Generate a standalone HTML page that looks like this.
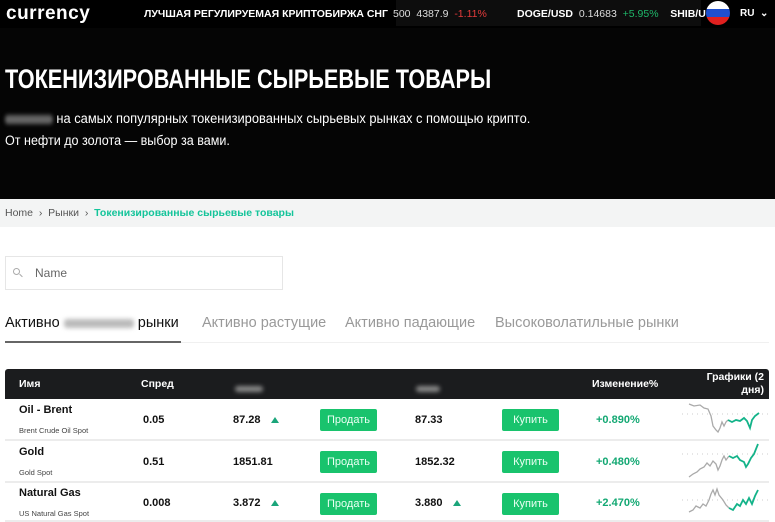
<!DOCTYPE html>
<html><head><meta charset="utf-8"><style>
*{margin:0;padding:0;box-sizing:border-box}
body{width:775px;height:522px;overflow:hidden;background:#fff;font-family:"Liberation Sans",sans-serif;position:relative;color:#111}
.a{position:absolute;white-space:nowrap}
.hero{position:absolute;left:0;top:0;width:775px;height:199px;background:#050505}
.top{position:absolute;left:0;top:0;width:775px;height:28px;background:#000}
.tick{position:absolute;left:396px;top:0;width:305px;height:26px;background:#0d0d0d}
.bc{position:absolute;left:0;top:199px;width:775px;height:28px;background:#f3f4f4}
.blur{display:inline-block;background:#9a9a9a;filter:blur(2px);border-radius:3px;vertical-align:middle}
.th{position:absolute;top:369px;left:5px;width:764px;height:30px;background:#1b1c1e;border-radius:3px 3px 0 0}
.row{position:absolute;left:5px;width:764px;height:42px;border-bottom:2px solid #ececec;background:#fff}
.btn{position:absolute;width:57px;height:22px;background:#19c36d;color:#eafff3;font-size:11px;text-align:center;line-height:22px;border-radius:2px}
.nm{font-size:11px;font-weight:bold}
.sub{font-size:7.5px;color:#444}
.v{font-size:11px;font-weight:bold}
.g{color:#13a873;font-size:11px;font-weight:bold}
.tri{display:inline-block;width:0;height:0;border-left:4px solid transparent;border-right:4px solid transparent;border-bottom:6px solid #1aa57a;margin-left:10px}
</style></head><body>
<div class="hero"></div>
<div class="top"></div>
<div class="tick"></div>
<div class="a" style="left:6px;top:3px;color:#fff;font-size:19px;font-weight:bold;letter-spacing:0.5px">currency</div>
<div class="a" style="left:144px;top:8px;color:#fff;font-size:10.5px;font-weight:bold">ЛУЧШАЯ РЕГУЛИРУЕМАЯ КРИПТОБИРЖА СНГ</div>
<div class="a" style="left:393px;top:8px;color:#ddd;font-size:10.5px">500&nbsp;&nbsp;4387.9&nbsp;&nbsp;<span style="color:#e53b3b">-1.11%</span></div>
<div class="a" style="left:517px;top:8px;color:#ddd;font-size:10.5px"><b style="color:#fff">DOGE/USD</b>&nbsp;&nbsp;0.14683&nbsp;&nbsp;<span style="color:#1fb86a">+5.95%</span>&nbsp;&nbsp;&nbsp;&nbsp;<b style="color:#fff">SHIB/U</b></div>
<div class="a" style="left:706px;top:1px;width:24px;height:24px;border-radius:50%;overflow:hidden"><div style="height:8px;background:#fff"></div><div style="height:8px;background:#1e4fcf"></div><div style="height:8px;background:#e0201f"></div></div>
<div class="a" style="left:740px;top:8px;color:#fff;font-size:10px;font-weight:bold">RU&nbsp;&nbsp;⌄</div>
<div class="a" style="left:5px;top:64px;color:#fff;font-size:27px;font-weight:bold;transform:scaleX(0.803);transform-origin:0 0">ТОКЕНИЗИРОВАННЫЕ СЫРЬЕВЫЕ ТОВАРЫ</div>
<div class="a" style="left:5px;top:111px;color:#fff;font-size:13.5px;transform:scaleX(0.955);transform-origin:0 0"><span class="blur" style="width:50px;height:9px;background:#666"></span> на самых популярных токенизированных сырьевых рынках с помощью крипто.</div>
<div class="a" style="left:5px;top:133px;color:#fff;font-size:13.5px;transform:scaleX(0.93);transform-origin:0 0">От нефти до золота — выбор за вами.</div>
<div class="bc"></div>
<div class="a" style="left:5px;top:207px;font-size:10.5px;color:#555">Home&nbsp;&nbsp;›&nbsp;&nbsp;Рынки&nbsp;&nbsp;›&nbsp;&nbsp;<b style="color:#14c49a">Токенизированные сырьевые товары</b></div>
<div class="a" style="left:5px;top:256px;width:278px;height:34px;border:1px solid #e6e6e6"></div>
<div class="a" style="left:13px;top:268px;width:7px;height:7px;border:1px solid #aaa;border-radius:50%"></div>
<div class="a" style="left:19px;top:275px;width:4px;height:1px;background:#aaa;transform:rotate(45deg)"></div>
<div class="a" style="left:35px;top:266px;font-size:12px;color:#666">Name</div>
<div class="a" style="left:5px;top:315px;font-size:14.5px;color:#111">Активно <span class="blur" style="width:70px;height:9px;background:#bbb"></span> рынки</div>
<div class="a" style="left:202px;top:315px;font-size:14.5px;color:#999">Активно растущие</div>
<div class="a" style="left:345px;top:315px;font-size:14.5px;color:#999">Активно падающие</div>
<div class="a" style="left:495px;top:315px;font-size:14.5px;color:#999">Высоковолатильные рынки</div>
<div class="a" style="left:5px;top:342px;width:764px;height:1px;background:#f0f0f0"></div>
<div class="a" style="left:5px;top:341px;width:176px;height:2px;background:#666"></div>

<div class="th"></div>
<div class="a" style="left:19px;top:378px;color:#fff;font-size:10.5px;font-weight:bold">Имя</div>
<div class="a" style="left:141px;top:378px;color:#fff;font-size:10.5px;font-weight:bold">Спред</div>
<div class="a" style="left:235px;top:380px"><span class="blur" style="width:28px;height:6px;background:#888"></span></div>
<div class="a" style="left:416px;top:380px"><span class="blur" style="width:24px;height:6px;background:#888"></span></div>
<div class="a" style="left:592px;top:378px;color:#fff;font-size:10.5px;font-weight:bold">Изменение%</div>
<div class="a" style="left:700px;top:371px;color:#fff;font-size:10.5px;font-weight:bold;text-align:right;width:64px;white-space:normal;line-height:13px">Графики (2 дня)</div>

<div class="row" style="top:399px"></div>
<div class="row" style="top:441px"></div>
<div class="row" style="top:483px;height:39px"></div>

<div class="a nm" style="left:19px;top:404px">Oil - Brent</div>
<div class="a sub" style="left:19px;top:426px">Brent Crude Oil Spot</div>
<div class="a v" style="left:143px;top:414px">0.05</div>
<div class="a v" style="left:233px;top:414px">87.28<span class="tri"></span></div>
<div class="btn" style="left:320px;top:409px">Продать</div>
<div class="a v" style="left:415px;top:414px">87.33</div>
<div class="btn" style="left:502px;top:409px">Купить</div>
<div class="a g" style="left:596px;top:414px">+0.890%</div>

<div class="a nm" style="left:19px;top:446px">Gold</div>
<div class="a sub" style="left:19px;top:468px">Gold Spot</div>
<div class="a v" style="left:143px;top:456px">0.51</div>
<div class="a v" style="left:233px;top:456px">1851.81</div>
<div class="btn" style="left:320px;top:451px">Продать</div>
<div class="a v" style="left:415px;top:456px">1852.32</div>
<div class="btn" style="left:502px;top:451px">Купить</div>
<div class="a g" style="left:596px;top:456px">+0.480%</div>

<div class="a nm" style="left:19px;top:487px">Natural Gas</div>
<div class="a sub" style="left:19px;top:509px">US Natural Gas Spot</div>
<div class="a v" style="left:143px;top:497px">0.008</div>
<div class="a v" style="left:233px;top:497px">3.872<span class="tri"></span></div>
<div class="btn" style="left:320px;top:493px">Продать</div>
<div class="a v" style="left:415px;top:497px">3.880<span class="tri"></span></div>
<div class="btn" style="left:502px;top:493px">Купить</div>
<div class="a g" style="left:596px;top:497px">+2.470%</div>

<svg class="a" style="left:680px;top:400px" width="90" height="122" viewBox="0 0 90 122">
<g stroke="#ccc" stroke-dasharray="1 4" stroke-width="1"><line x1="2" y1="14" x2="88" y2="14"/><line x1="2" y1="54" x2="88" y2="54"/><line x1="2" y1="100" x2="88" y2="100"/></g>
<polyline fill="none" stroke="#aaa" stroke-width="1.3" points="9,4 14,6 20,5 24,8 28,9 31,16 33,26 36,30 38,32 40,28 42,22 44,26 46,22 48,20"/>
<polyline fill="none" stroke="#13b389" stroke-width="1.8" points="48,20 52,22 56,20 60,21 64,18 67,21 70,28 72,20 75,16 79,13"/>
<polyline fill="none" stroke="#aaa" stroke-width="1.3" points="9,77 13,74 17,72 20,69 24,67 27,63 30,66 33,61 36,64 38,70 40,66 42,60 44,56 46,60 49,56"/>
<polyline fill="none" stroke="#13b389" stroke-width="1.8" points="49,56 53,58 57,56 60,60 64,62 66,67 68,64 71,58 74,54 78,44"/>
<polyline fill="none" stroke="#aaa" stroke-width="1.3" points="9,112 13,110 16,106 20,108 23,104 26,106 29,100 31,94 33,90 35,95 37,89 39,95 43,100 46,105 49,108"/>
<polyline fill="none" stroke="#13b389" stroke-width="1.8" points="49,108 53,110 57,104 60,106 63,100 66,104 69,98 72,104 75,96 78,90"/>
</svg>
</body></html>
